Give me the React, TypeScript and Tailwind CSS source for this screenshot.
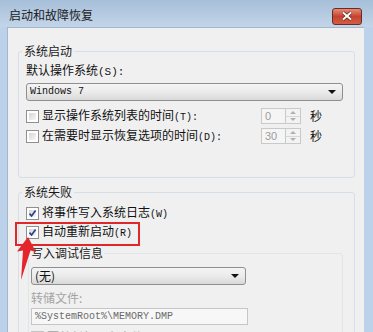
import React from 'react';

const CJK = "font-['Noto_Sans_CJK_SC','Noto_Sans',sans-serif]";
const MONO = "font-['Liberation_Mono','DejaVu_Sans_Mono',monospace]";

function CheckBox({ checked = false, disabled = false }: { checked?: boolean; disabled?: boolean }) {
  return (
    <div
      className={`w-[13px] h-[13px] shrink-0 border p-[2px] bg-white ${disabled ? 'border-[#c4c4c4]' : 'border-[#8e8f8f]'}`}
    >
      <div className="w-full h-full bg-gradient-to-br from-[#d6d6d6] to-[#f7f7f7] relative">
        {checked && (
          <svg viewBox="0 0 9 9" className="absolute -left-[1px] -top-[1px] w-[9px] h-[9px]">
            <path d="M1.5 4.6 L3.6 7 L7.6 1.4" fill="none" stroke="#2a3f8f" strokeWidth="1.7" />
          </svg>
        )}
      </div>
    </div>
  );
}

function Spinner({ value }: { value: string }) {
  return (
    <div className="flex h-[16px]">
      <div className="w-[25px] h-full border border-[#c9c9c9] bg-[#f5f5f5] pl-[3px] text-[11px] leading-[14px] text-[#9c9c9c] font-['Liberation_Sans',sans-serif]">
        {value}
      </div>
      <div className="w-[15px] h-full border border-l-0 border-[#c9c9c9] bg-[#f3f3f3] flex flex-col">
        <div className="flex-1 flex items-center justify-center border-b border-[#d8d8d8]">
          <div className="w-0 h-0 border-l-[3px] border-r-[3px] border-b-[3px] border-l-transparent border-r-transparent border-b-[#b0b0b0]" />
        </div>
        <div className="flex-1 flex items-center justify-center">
          <div className="w-0 h-0 border-l-[3px] border-r-[3px] border-t-[3px] border-l-transparent border-r-transparent border-t-[#b0b0b0]" />
        </div>
      </div>
    </div>
  );
}

function Dropdown({ children, width }: { children: React.ReactNode; width: string }) {
  return (
    <div
      className={`${width} h-[18px] rounded-[3px] border border-[#8f8f8f] bg-gradient-to-b from-[#f4f4f4] via-[#ebebeb] to-[#d9d9d9] flex items-center justify-between pl-[3px] pr-[6px]`}
    >
      {children}
      <div className="w-0 h-0 border-l-[4px] border-r-[4px] border-t-[4px] border-l-transparent border-r-transparent border-t-[#111]" />
    </div>
  );
}

export default function App() {
  return (
    <div className={`w-[373px] h-[332px] overflow-hidden relative flex flex-col bg-[#bcd2ea] ${CJK}`}>
      {/* title bar */}
      <div className="h-[27px] shrink-0 flex items-center justify-between pl-[9px] pr-[11px] bg-gradient-to-b from-[#a6bfd9] to-[#c3d5e9]">
        <span className="text-[12px] leading-[16px] text-[#1a1a1a] pt-[2px]">启动和故障恢复</span>
        <div className="w-[30px] h-[17px] mt-[5px] rounded-[3px] border border-[#6b2b24] bg-gradient-to-b from-[#e38b77] via-[#c4432f] to-[#d35c45] flex items-center justify-center">
          <svg viewBox="0 0 12 10" className="w-[12px] h-[10px]">
            <path d="M2 1.5 L10 8.5 M10 1.5 L2 8.5" stroke="#5a1f18" strokeWidth="3.2" />
            <path d="M2 1.5 L10 8.5 M10 1.5 L2 8.5" stroke="#ffffff" strokeWidth="2" />
          </svg>
        </div>
      </div>

      <div className="flex-1 flex pl-[7px] pr-[9px]">
        <div className="flex-1 bg-[#f0f0f0] border-l border-t border-[#a3b7cc] pl-[10px] pr-[9px] pt-[15px] text-[12px] text-[#111]">
          {/* 系统启动 */}
          <fieldset className="h-[135px] border border-[#d5dfe5] rounded-[3px] px-[3px]">
            <legend className="px-[2px] leading-[16px] text-[#1a1a1a]">系统启动</legend>
            <div className="pl-[4px] pr-[8px]">
              <div className="mt-[3px] leading-[16px]">
                默认操作系统<span className={`${MONO} text-[11px]`}>(S):</span>
              </div>
              <div className="mt-[3px]">
                <Dropdown width="w-full">
                  <span className={`${MONO} text-[10px] leading-[14px] text-[#111]`}>Windows 7</span>
                </Dropdown>
              </div>
              <div className="mt-[5px] h-[20px] flex items-center">
                <CheckBox />
                <span className="ml-[3px] leading-[16px] flex-1">
                  显示操作系统列表的时间<span className={`${MONO} text-[10px]`}>(T):</span>
                </span>
                <Spinner value="0" />
                <span className="ml-[9px] mr-[21px]">秒</span>
              </div>
              <div className="h-[20px] flex items-center">
                <CheckBox />
                <span className="ml-[3px] leading-[16px] flex-1">
                  在需要时显示恢复选项的时间<span className={`${MONO} text-[10px]`}>(D):</span>
                </span>
                <Spinner value="30" />
                <span className="ml-[9px] mr-[21px]">秒</span>
              </div>
            </div>
          </fieldset>

          {/* 系统失败 */}
          <fieldset className="mt-[6px] h-[200px] border border-[#d5dfe5] rounded-[3px] px-[3px]">
            <legend className="px-[2px] leading-[16px] text-[#1a1a1a]">系统失败</legend>
            <div className="pl-[4px] pr-[6px]">
              <div className="mt-[4px] h-[19px] flex items-center">
                <CheckBox checked />
                <span className="ml-[3px] leading-[16px]">
                  将事件写入系统日志<span className={`${MONO} text-[10px]`}>(W)</span>
                </span>
              </div>
              <div className="h-[19px] flex items-center">
                <CheckBox checked />
                <span className="ml-[3px] leading-[16px]">
                  自动重新启动<span className={`${MONO} text-[10px]`}>(R)</span>
                </span>
              </div>
              <fieldset className="mt-[3px] ml-[2px] mr-[2px] h-[120px] border border-[#dfe6ea] rounded-[3px] px-[1px]">
                <legend className="px-[1px] leading-[16px] text-[#1a1a1a]">写入调试信息</legend>
                <div className="mt-[6px] ml-[1px]">
                  <Dropdown width="w-[215px]">
                    <span className="leading-[14px] text-[12px]">(无)</span>
                  </Dropdown>
                </div>
                <div className="mt-[5px] ml-[1px] leading-[16px] text-[#a3a3a3]">转储文件:</div>
                <div className="mt-[2px] ml-[1px] w-[217px] h-[17px] border border-[#c6c6c6] bg-[#f7f7f7] pl-[3px] flex items-center">
                  <span className={`${MONO} text-[10px] leading-[14px] text-[#6a6a6a]`}>%SystemRoot%\MEMORY.DMP</span>
                </div>
                <div className="mt-[4px] ml-[1px] h-[16px] flex items-center">
                  <CheckBox disabled />
                  <span className="ml-[3px] leading-[16px] text-[#a3a3a3]">覆盖任何现有文件</span>
                </div>
              </fieldset>
            </div>
          </fieldset>
        </div>
      </div>

      {/* red highlight box */}
      <div className="absolute left-[15px] top-[222px] w-[125px] h-[24px] border-2 border-[#e0282b]" />
      {/* red arrow */}
      <svg viewBox="0 0 24 48" className="absolute left-[13px] top-[236px] w-[24px] h-[48px]">
        <path d="M15 1 L23 16 L17.5 14.5 L8 44 L10 14.5 L4 15.5 Z" fill="#e3262a" />
      </svg>
    </div>
  );
}
